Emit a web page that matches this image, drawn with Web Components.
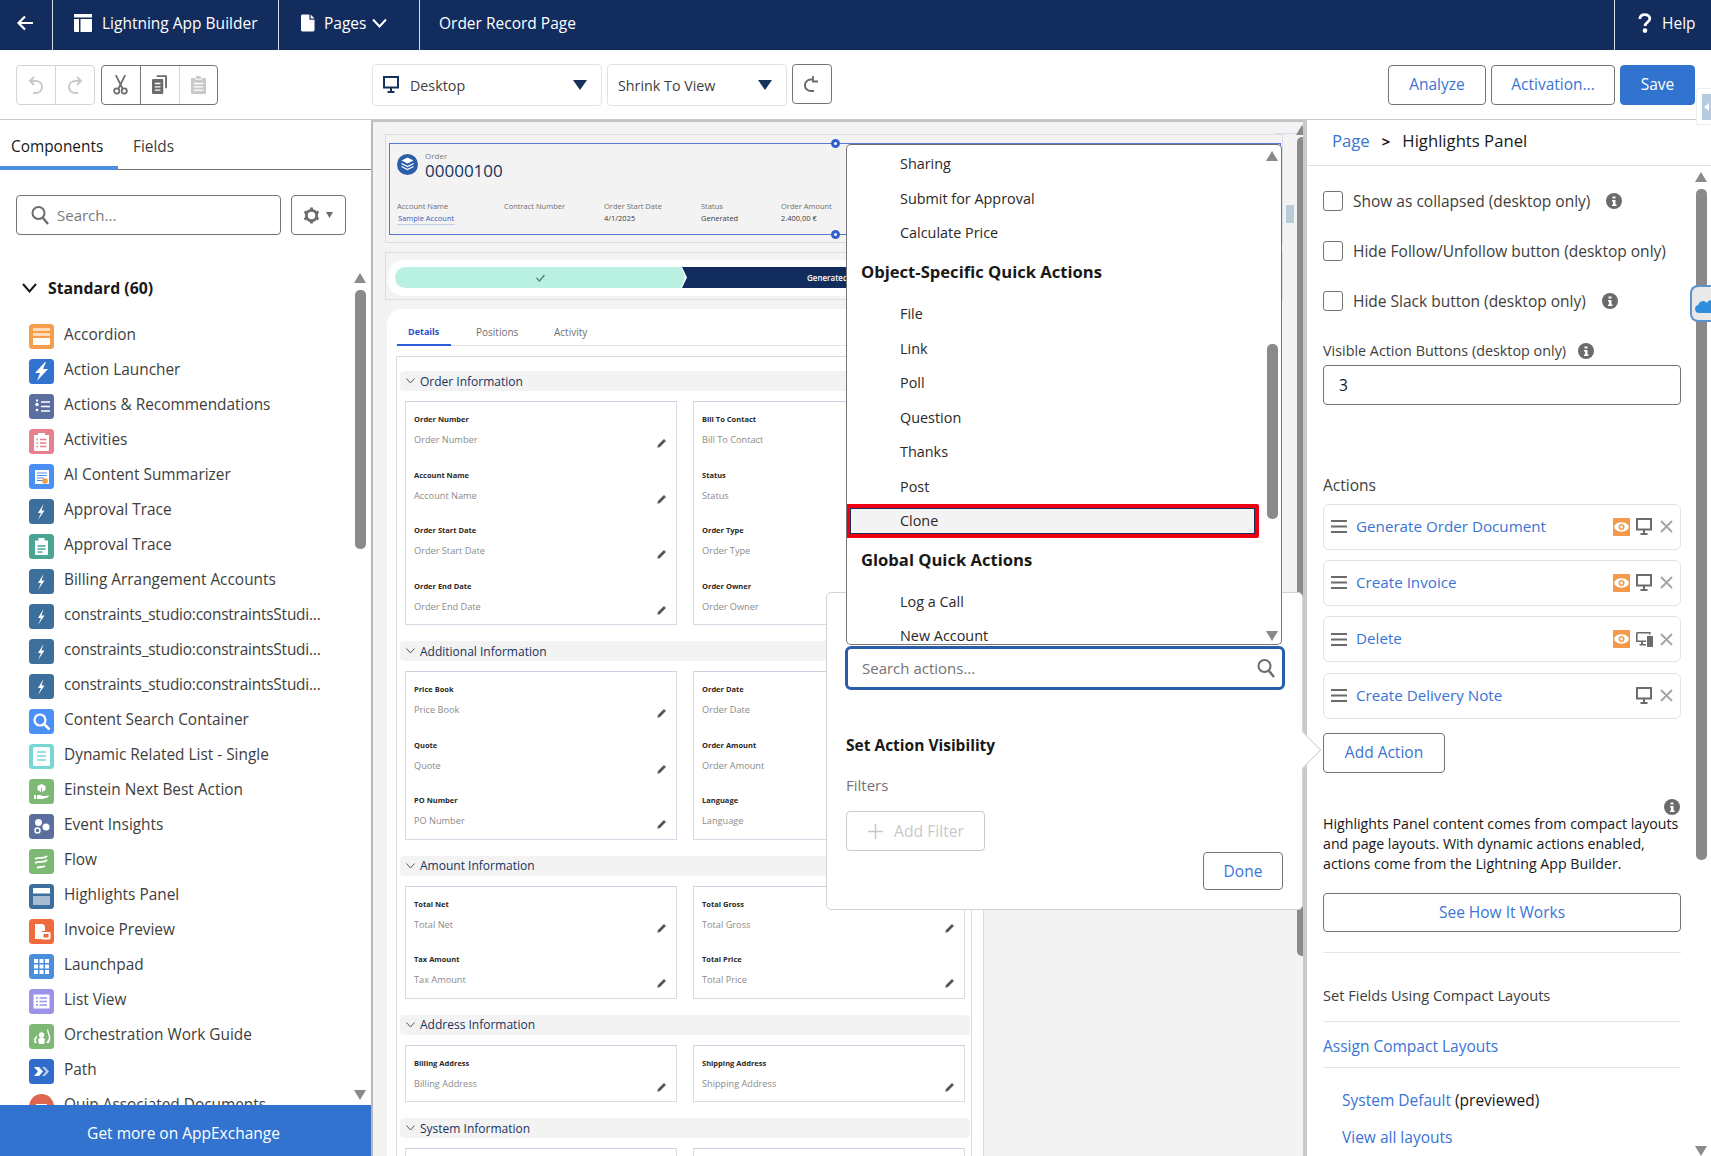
<!DOCTYPE html>
<html lang="en">
<head>
<meta charset="utf-8">
<title>Lightning App Builder</title>
<style>
	html,body{margin:0;height:100%;overflow:hidden;background:#fff;}
	body{font-family:"Open Sans","Noto Sans","Liberation Sans",sans-serif;}
</style>
</head>
<body>
<app-builder></app-builder>
<script>
const ICON = {
	back:`<svg width="18" height="18" viewBox="0 0 18 18" fill="none" stroke="#fff" stroke-width="2.2"><path d="M17 9H3M9 2.5 2.5 9 9 15.5"/></svg>`,
	app:`<svg width="20" height="20" viewBox="0 0 20 20" fill="#fff"><path d="M1 1h18v3.5H1z"/><path d="M1 6h5v13H2a1 1 0 0 1-1-1zM7.5 6H19v12a1 1 0 0 1-1 1H7.5z"/></svg>`,
	file:`<svg width="14" height="18" viewBox="0 0 15 18" fill="#fff"><path d="M1.5 0H9v5.5h5.5v11A1.5 1.5 0 0 1 13 18H1.5A1.5 1.5 0 0 1 0 16.5v-15A1.500 1.500 0 0 1 1.5 0z"/><path d="M10.3 0l4.200 4.200h-4.200z"/></svg>`,
	chev:`<svg width="15" height="10" viewBox="0 0 15 10" fill="none" stroke="#fff" stroke-width="2"><path d="M1 1.5 7.500 8.500 14 1.500"/></svg>`,
	help:`<svg width="14" height="20" viewBox="0 0 14 20" fill="none" stroke="#fff" stroke-width="2.8"><path d="M1.8 6C2 3 4 1.600 6.800 1.600c3 0 5 1.700 5 4.200 0 2.200-1.500 3-3 4-1.200.8-1.800 1.600-1.800 3.200"/><circle cx="7" cy="17.600" r="1" fill="#fff"/></svg>`,
	undo:`<svg width="16" height="20" viewBox="0 0 16 20" fill="none" stroke="currentColor" stroke-width="2"><path d="M6 2 2 6l4 4"/><path d="M2.5 6h5c4 0 6.500 2.500 6.500 6s-2.500 6-6.500 6H5"/></svg>`,
	redo:`<svg width="16" height="20" viewBox="0 0 16 20" fill="none" stroke="currentColor" stroke-width="2"><path d="M10 2l4 4-4 4"/><path d="M13.5 6h-5C4.500 6 2 8.500 2 12s2.500 6 6.500 6H11"/></svg>`,
	cut:`<svg width="15" height="21" viewBox="0 0 16 22" fill="none" stroke="currentColor" stroke-width="1.8"><path d="M3 1l7 14M13 1 6 15"/><circle cx="4" cy="18" r="2.800"/><circle cx="12" cy="18" r="2.800"/></svg>`,
	copy:`<svg width="15" height="19" viewBox="0 0 16 20"><path fill="currentColor" d="M5 0h10a1 1 0 0 1 1 1v13h-2V2H5z"/><path fill="currentColor" d="M1 4h10a1 1 0 0 1 1 1v14a1 1 0 0 1-1 1H1a1 1 0 0 1-1-1V5a1 1 0 0 1 1-1z"/><path stroke="#fff" stroke-width="1.5" d="M3 9h6M3 12.500h6M3 16h6"/></svg>`,
	paste:`<svg width="15" height="19" viewBox="0 0 16 20"><path fill="currentColor" d="M1 3h14a1 1 0 0 1 1 1v15a1 1 0 0 1-1 1H1a1 1 0 0 1-1-1V4a1 1 0 0 1 1-1z"/><path fill="currentColor" stroke="#fff" d="M5 .5h6v4H5z"/><path stroke="#fff" stroke-width="1.5" d="M3 9h10M3 12.500h10M3 16h10"/></svg>`,
	desk:`<svg width="16" height="18" viewBox="0 0 16 18"><path fill="none" stroke="currentColor" stroke-width="2" d="M1 1h14v10.500H1z"/><path fill="currentColor" d="M7 12h2v3h2.500v2h-7v-2H7z"/></svg>`,
	refresh:`<svg width="16" height="18" viewBox="0 0 16 18" fill="none" stroke="#6b6b6b" stroke-width="2"><path d="M9.5 4.500H7.500a5.800 5.800 0 1 0 0 11.500H10"/><path d="M9 1v5.500h5" stroke-width="1.8"/></svg>`,
	search:`<svg width="18" height="20" viewBox="0 0 18 20" fill="none" stroke="#6b6b6b" stroke-width="2"><circle cx="7.5" cy="8" r="6"/><path d="M12 13l5 6" stroke-width="2.4"/></svg>`,
	gear:`<svg width="15" height="19" viewBox="0 0 16 20"><circle cx="8" cy="10" r="5.500" fill="none" stroke="#6b6b6b" stroke-width="3"/><path stroke="#6b6b6b" stroke-width="3" d="M8 1.500v3M8 15.500v3M.5 6l3 1.800M12.500 12.200l3 1.800M.5 14l3-1.800M12.500 7.800l3-1.800"/></svg>`,
	tri:`<svg width="7" height="6" viewBox="0 0 7 6"><path fill="#6b6b6b" d="M0 0h7L3.500 6z"/></svg>`,
	info:`<svg width="16" height="16" viewBox="0 0 16 16"><circle cx="8" cy="8" r="8" fill="#6b6b6b"/><path fill="#fff" d="M6.500 3.500h3v2h-3zM6 7h3.500v4.500h1V13h-4.500v-1.500h1V8.500H6z"/></svg>`,
	pencil:`<svg width="9" height="9" viewBox="0 0 9 9"><path fill="#555" d="M.3 8.700l.7-2.700L6.400.6l2 2L3 8zM7 0l2 2-.5.5-2-2z"/></svg>`,
	drag:`<svg width="16" height="13" viewBox="0 0 16 13" fill="#6b6b6b"><path d="M0 0h16v2H0zM0 5.500h16v2H0zM0 11h16v2H0z"/></svg>`,
	eye:`<svg width="17" height="18" viewBox="0 0 17 18"><path fill="#f49b4a" d="M0 0h17v18H0z"/><ellipse cx="8.500" cy="9" rx="7.300" ry="4.700" fill="#fff"/><circle cx="8.500" cy="9" r="3" fill="#f49b4a"/><circle cx="8.500" cy="9" r="1.400" fill="#fff"/></svg>`,
	close:`<svg width="13" height="13" viewBox="0 0 13 13" fill="none" stroke="#a3a3a3" stroke-width="1.8"><path d="M1 1l11 11M12 1 1 12"/></svg>`,
	multi:`<svg width="17" height="15" viewBox="0 0 17 15"><path fill="none" stroke="#6b6b6b" stroke-width="1.6" d="M.8.800h13v1.700M.8.800v8.500H10"/><path fill="#6b6b6b" d="M5 10h2v2h3v1.500H3.500V12H5zM11 4h6v11h-6z"/></svg>`,
	plus:`<svg width="15" height="15" viewBox="0 0 15 15" stroke="#c9c9c9" stroke-width="1.6"><path d="M7.500 0v15M0 7.500h15"/></svg>`,
	layers:`<svg width="21" height="21" viewBox="0 0 21 21"><circle cx="10.500" cy="10.500" r="10.500" fill="#2a5ea6"/><path fill="#fff" d="M10.500 3.500l6 3-6 3-6-3z"/><path fill="none" stroke="#fff" stroke-width="1.3" d="M4.500 9.500l6 3 6-3M4.500 12.500l6 3 6-3"/></svg>`,
	cloud:`<svg width="20" height="13" viewBox="0 0 20 13"><path fill="#2f8fdc" d="M5 13a4 4 0 0 1-.8-7.900A5 5 0 0 1 13 3a3.500 3.500 0 0 1 7 2v8z"/></svg>`
}
const BOLT = `<path fill="#fff" d="M14.500 5 9 14h3l-3 7 6.500-9.500h-3z"/>`
const tile = (bg, body) => `<svg width="25" height="25" viewBox="0 0 25 25"><rect width="25" height="25" rx="3.500" fill="${bg}"/>${body}</svg>`
const TILE = {
	accordion:tile('#f59e4c',`<path fill="#fcdcbc" d="M4 4h17v3H4zM4 9h17v3H4z"/><path fill="#fff" d="M4 14h17v7H4z"/>`),
	launcher:tile('#3273d0',`<path fill="#fff" d="M16 3 6 14h5l-3 8 11-12h-5l3-7z"/>`),
	recs:tile('#5a6f9f',`<path stroke="#fff" stroke-width="1.5" d="M12 8h9M12 12.500h9M12 17h9"/><circle cx="8" cy="10.500" r="1.700" fill="#fff"/><circle cx="8" cy="16" r="1.300" fill="#fff"/><path fill="#fff" d="M7 5.500h2v2H7z"/>`),
	activity:tile('#e9808e',`<path fill="#fff" d="M5 6h15v15a1 1 0 0 1-1 1H6a1 1 0 0 1-1-1z"/><path fill="#fff" d="M9 4h7v3H9z"/><path stroke="#e9808e" stroke-width="1.3" d="M7.500 10.500h1.500M11 10.500h6.500M7.500 14h1.500M11 14h6.500M7.500 17.500h1.500M11 17.500h6.500"/>`),
	ai:tile('#4a90f2',`<path fill="#fff" d="M6 6h14v14H6z"/><path stroke="#4a90f2" d="M8 9h10M8 11.500h10M8 14h7M8 16.500h6"/><circle cx="16" cy="17" r="2.800" fill="#f49b4a"/>`),
	bolt:tile('#3d6f9c',BOLT),
	approve:tile('#4aa594',`<path fill="#fff" d="M6 6.500h13V20a1 1 0 0 1-1 1H7a1 1 0 0 1-1-1z"/><path fill="#fff" d="M9.500 4h6v3.500h-6z"/><path stroke="#4aa594" stroke-width="1.3" d="M8.500 12h8M8.500 15h8M8.500 18h5"/>`),
	search:tile('#4a90f5',`<circle cx="11" cy="11" r="5.500" fill="none" stroke="#fff" stroke-width="2.2"/><path stroke="#fff" stroke-width="2.5" d="M15 15l5.500 5.500"/>`),
	related:tile('#78d6d8',`<rect x="4" y="3" width="17" height="19" rx="1.500" fill="#fff"/><path stroke="#78d6d8" stroke-width="1.7" d="M8 8h9M8 12h9M8 16h9"/>`),
	einstein:tile('#7db974',`<path fill="#fff" d="M12.500 5l4 2v4l-4 2.200L8.500 11V7z"/><path fill="#7db974" d="M12 9h1v4h-1z"/><path fill="#fff" d="M5 16h2v4H5zM8 16.500c2-1 4 0 5.500.5h3l3-.5c.7.500 0 1.500-1 2l-5 1.500H8z"/>`),
	event:tile('#5a6f9f',`<circle cx="9.500" cy="8.500" r="3.500" fill="#fff"/><circle cx="17" cy="13" r="3.500" fill="#fff"/><circle cx="8.500" cy="16.500" r="2.500" fill="none" stroke="#fff" stroke-width="1.5"/>`),
	flow:tile('#7db974',`<path fill="none" stroke="#fff" stroke-width="1.8" d="M6 10c4-3 8 1 12-3M6 14c4-3 8 1 12-3M8 19c3-2 5 0 8-2"/>`),
	highlights:tile('#3d6f9c',`<path fill="#fff" d="M4 4h17v5.500H4z"/><path fill="#a9bdd1" d="M4 12h17v9H4z"/>`),
	invoice:tile('#ef6a3c',`<path fill="#fff" d="M6 5h8l2 2v5h-3v8H6z"/><rect x="12.500" y="13" width="9" height="7.500" rx="1" fill="#fff"/><rect x="14.500" y="15" width="5" height="3.500" fill="#ef6a3c"/>`),
	launchpad:tile('#4a8fdc',`<path fill="#fff" d="M5 5h4v4H5zM10.500 5h4v4h-4zM16 5h4v4h-4zM5 10.500h4v4H5zM10.500 10.500h4v4h-4zM16 10.500h4v4h-4zM5 16h4v4H5zM10.500 16h4v4h-4zM16 16h4v4h-4z"/>`),
	list:tile('#9b93e8',`<path fill="#fff" d="M4.500 5.500h16v14h-16z"/><path stroke="#9b93e8" stroke-width="1.4" d="M7 9h2M10.500 9H18M7 12.500h2M10.500 12.500H18M7 16h2M10.500 16H18"/>`),
	orch:tile('#7db974',`<circle cx="12.500" cy="11" r="2.700" fill="#fff"/><path fill="#fff" d="M9 15l3.500-2 3.500 2-1 5h-5zM5 15l3-4v3l-1.500 2L8 19H5.500zM20 14l-2-8 1-1 2.500 9-1.500 5h-3l1.500-2z"/>`),
	path:tile('#2f6ccb',`<path fill="#fff" d="M5 8h5l4 4.500-4 4.500H5l4-4.500z"/><path fill="#b9cdf0" d="M13 8h3l4 4.500-4 4.500h-3l4-4.500z"/>`),
	quip:`<svg width="25" height="25" viewBox="0 0 25 25"><circle cx="12.500" cy="12.500" r="12.500" fill="#e0654f"/><path fill="#fff" d="M7 10h11v2H7z"/></svg>`
}

class AppBuilder extends HTMLElement {
	connectedCallback(){
		this.attachShadow({mode:'open'}).innerHTML = `
		<style>
			:host{display:flex;flex-direction:column;width:1711px;height:1156px;position:relative;overflow:hidden;color:#181818;}
			.main{flex:1;min-height:0;display:grid;grid-template-columns:371px 932px 408px;position:relative;}
			.tab-a,.tab-b{position:absolute;box-sizing:border-box;}
			.tab-a{left:1696px;top:88px;width:15px;height:37px;background:#fff;border:1px solid #eee;border-right:0;border-radius:3px 0 0 3px;padding:5px 0 0 5px;}
			.tab-a i{display:block;height:26px;background:#b6cbdf;position:relative;}
			.tab-a i:after{content:"";position:absolute;left:2px;top:9px;border:4px solid transparent;border-right:5px solid #fff;border-left:0;}
			.tab-b{left:1690px;top:285px;width:22px;height:37px;background:#e9e9e9;border:2px solid #5c93cd;border-right:0;border-radius:8px 0 0 8px;padding:9px 0 0 2px;overflow:hidden;}
		</style>
		<lab-header></lab-header>
		<lab-toolbar></lab-toolbar>
		<div class="main">
			<comp-panel></comp-panel>
			<page-canvas></page-canvas>
			<prop-panel></prop-panel>
			<action-popover></action-popover>
		</div>
		<div class="tab-a"><i></i></div>
		<div class="tab-b">${ICON.cloud}</div>`;
	}
}

class LabHeader extends HTMLElement {
	connectedCallback(){
		this.attachShadow({mode:'open'}).innerHTML = `
		<style>
			:host{display:flex;height:50px;background:#132c5e;color:#fff;font-size:15.5px;align-items:stretch;}
			.cell{display:flex;align-items:center;box-sizing:border-box;border-right:1px solid #d8dde8;padding-bottom:4px;}
			.back{width:53px;padding-left:16px;}
			.app{width:226px;padding-left:20px;gap:9px;}
			.pages{width:141px;padding-left:22px;gap:11px;}
			.pages b{font-weight:400;margin:0 -5px 0 -2px;}
			.title{padding-left:19px;display:flex;align-items:center;flex:1;padding-bottom:4px;}
			.help{width:97px;border-left:1px solid #d8dde8;border-right:0;padding-left:23px;gap:10px;}
		</style>
		<div class="cell back">${ICON.back}</div>
		<div class="cell app">${ICON.app}<span>Lightning App Builder</span></div>
		<div class="cell pages">${ICON.file}<b>Pages</b>${ICON.chev}</div>
		<div class="title">Order Record Page</div>
		<div class="cell help">${ICON.help}<span>Help</span></div>`;
	}
}

class LabButton extends HTMLElement {
	connectedCallback(){
		this.attachShadow({mode:'open'}).innerHTML = `
		<style>
			:host{display:inline-flex;align-items:center;justify-content:center;box-sizing:border-box;height:40px;border:1px solid #747474;border-radius:4px;background:#fff;color:#3a74d4;font-size:15.5px;white-space:nowrap;padding-bottom:2px;}
			:host([brand]){background:#3273d0;border-color:#3273d0;color:#fff;}
			:host([off]){border-color:#c9c9c9;color:#c4c4c4;}
		</style><slot></slot>`;
	}
}

class LabToolbar extends HTMLElement {
	connectedCallback(){
		const sel = (w, inner) => `<div class="sel" style="width:${w}px">${inner}<span class="tri"></span></div>`;
		this.attachShadow({mode:'open'}).innerHTML = `
		<style>
			:host{display:flex;align-items:center;height:70px;box-sizing:border-box;border-bottom:1px solid #c9c9c9;padding:0 16px;color:#181818;}
			.grp{display:flex;border:1px solid #747474;border-radius:4px;height:40px;box-sizing:border-box;margin-right:6px;}
			.grp.off{border-color:#d4d4d4;}
			.grp span{width:38.4px;display:flex;align-items:center;justify-content:center;box-sizing:border-box;color:#6b6b6b;}
			.grp span+span{border-left:1px solid #747474;}
			.grp.off span{color:#c9c9c9;border-color:#d4d4d4;}
			.grp span.dis{color:#c9c9c9;border-left:1px solid #747474;}
			.sel{height:42px;box-sizing:border-box;border:1px solid #e3e3e3;border-radius:4px;display:flex;align-items:center;padding:1px 14px 0 10px;font-size:14.3px;color:#3e3e3c;margin-right:5px;gap:11px;}
			.sel em{font-style:normal;flex:1;}
			.sel svg{color:#16325c;}
			.tri{width:0;height:0;border:7px solid transparent;border-top:10px solid #16325c;border-bottom:0;}
			.re{width:40px;height:40px;box-sizing:border-box;border:1px solid #747474;border-radius:4px;display:flex;align-items:center;justify-content:center;margin-top:-2px;}
			.gap{width:148px;}
			.right{margin-left:auto;display:flex;gap:5px;}
		</style>
		<div class="grp off"><span>${ICON.undo}</span><span>${ICON.redo}</span></div>
		<div class="grp"><span>${ICON.cut}</span><span>${ICON.copy}</span><span class="dis" style="border-left-color:#d4d4d4">${ICON.paste}</span></div>
		<div class="gap"></div>
		${sel(230,`${ICON.desk}<em>Desktop</em>`)}
		${sel(180,`<em>Shrink To View</em>`)}
		<div class="re">${ICON.refresh}</div>
		<div class="right">
			<lab-button style="width:98px">Analyze</lab-button>
			<lab-button style="width:124px">Activation...</lab-button>
			<lab-button brand style="width:75px">Save</lab-button>
		</div>`;
	}
}

class VScroll extends HTMLElement {
	connectedCallback(){
		const t = this.getAttribute('thumb-top'), h = this.getAttribute('thumb-h');
		this.attachShadow({mode:'open'}).innerHTML = `
		<style>
			:host{position:absolute;display:block;width:12px;}
			.up,.dn{position:absolute;left:0;width:0;height:0;border:6px solid transparent;}
			.up{top:0;border-top:0;border-bottom:10px solid #8a8a8a;}
			.dn{bottom:0;border-bottom:0;border-top:10px solid #8a8a8a;}
			.th{position:absolute;left:1px;width:11px;border-radius:5px;background:#8a8a8a;top:${t}px;height:${h}px;}
		</style>
		<div class="up"></div><div class="th"></div><div class="dn"></div>`;
	}
}

class CompItem extends HTMLElement {
	connectedCallback(){
		this.attachShadow({mode:'open'}).innerHTML = `
		<style>
			:host{display:flex;align-items:center;height:35px;gap:10px;font-size:15.4px;color:#3e3e3c;white-space:nowrap;}
			svg{display:block;flex:none;}
			span{position:relative;top:-2px;}
		</style>
		${TILE[this.getAttribute('icon')]}<span><slot></slot></span>`;
	}
}

class CompPanel extends HTMLElement {
	connectedCallback(){
		const items = [['accordion','Accordion'],['launcher','Action Launcher'],['recs','Actions &amp; Recommendations'],['activity','Activities'],['ai','AI Content Summarizer'],['bolt','Approval Trace'],['approve','Approval Trace'],['bolt','Billing Arrangement Accounts'],['bolt','constraints_studio:constraintsStudi...'],['bolt','constraints_studio:constraintsStudi...'],['bolt','constraints_studio:constraintsStudi...'],['search','Content Search Container'],['related','Dynamic Related List - Single'],['einstein','Einstein Next Best Action'],['event','Event Insights'],['flow','Flow'],['highlights','Highlights Panel'],['invoice','Invoice Preview'],['launchpad','Launchpad'],['list','List View'],['orch','Orchestration Work Guide'],['path','Path'],['quip','Quip Associated Documents']];
		this.attachShadow({mode:'open'}).innerHTML = `
		<style>
			:host{display:flex;flex-direction:column;position:relative;min-height:0;height:1036px;background:#fff;overflow:hidden;}
			.tabs{display:flex;height:50px;box-sizing:border-box;border-bottom:1px solid #747474;font-size:15.4px;color:#3e3e3c;position:relative;}
			.tabs div{padding:14px 0 0 11px;line-height:26px;height:46px;box-sizing:border-box;}
			.tabs .on{width:118px;border-bottom:4px solid #4a90e2;color:#181818;height:50px;margin-bottom:-1px;}
			.tabs .f{padding-left:15px;}
			.find{display:flex;gap:10px;padding:25px 0 0 16px;}
			.box{height:40px;box-sizing:border-box;border:1px solid #747474;border-radius:4px;display:flex;align-items:center;}
			.q{width:265px;padding-left:14px;gap:8px;color:#7a7a7a;font-size:15px;}
			.g{width:55px;justify-content:center;gap:7px;}
			.std{display:flex;align-items:center;gap:11px;padding-left:22px;margin-top:41px;height:24px;font-weight:700;font-size:15.8px;}
			.std svg{stroke:#181818;}
			.list{flex:1;min-height:0;overflow:hidden;padding:19px 0 0 29px;}
			.more{height:51px;flex:none;box-sizing:border-box;padding:5px 4px 0 0;background:#3273d0;color:#fff;font-size:15.5px;display:flex;align-items:center;justify-content:center;}
		</style>
		<div class="tabs"><div class="on">Components</div><div class="f">Fields</div></div>
		<div class="find"><div class="box q">${ICON.search}<span>Search...</span></div><div class="box g">${ICON.gear}${ICON.tri}</div></div>
		<div class="std"><svg width="15" height="10" viewBox="0 0 15 10" fill="none" stroke-width="2"><path d="M1 1l6.500 7.500L14 1"/></svg><span>Standard (60)</span></div>
		<div class="list">${items.map(i=>`<comp-item icon="${i[0]}"${i[1].startsWith('constraints')?' style="letter-spacing:-.2px"':''}>${i[1]}</comp-item>`).join('')}</div>
		<div class="more">Get more on AppExchange</div>
		<v-scroll style="left:354px;top:153px;height:827px" thumb-top="17" thumb-h="259"></v-scroll>`;
	}
}

class RecField extends HTMLElement {
	connectedCallback(){
		this.attachShadow({mode:'open'}).innerHTML = `
		<style>
			:host{display:block;position:relative;height:var(--pitch,55.5px);padding-left:8px;line-height:12px;white-space:nowrap;}
			:host(:last-child){height:33px;}
			b{display:block;color:#2b2826;margin-bottom:9px;font-size:7.5px;}
			span{display:block;color:#8b8b8b;font-size:9.2px;}
			svg{position:absolute;right:10px;top:26px;}
		</style>
		<b>${this.getAttribute('label')}</b><span>${this.getAttribute('label')}</span>${ICON.pencil}`;
	}
}

class RecSection extends HTMLElement {
	connectedCallback(){
		this.attachShadow({mode:'open'}).innerHTML = `
		<style>
			:host{display:block;margin-bottom:16px;}
			.hd{display:flex;align-items:center;height:20px;margin:0 1px 10px 2px;background:#f3f3f3;border-radius:4px;padding-left:6px;gap:5px;font-size:12px;color:#16325c;}
			.hd svg{flex:none;}
			.cols{display:grid;grid-template-columns:272px 272px;gap:16px;margin-left:7px;}
		</style>
		<div class="hd"><svg width="9" height="6" viewBox="0 0 9 6" fill="none" stroke="#555"><path d="M.5.500 4.500 5l4-4.500"/></svg>${this.getAttribute('title')}</div>
		<div class="cols"><slot></slot></div>`;
	}
}

class RecCol extends HTMLElement {
	connectedCallback(){
		this.attachShadow({mode:'open'}).innerHTML = `
		<style>
			:host{display:block;box-sizing:border-box;border:1px solid #d5dbe7;border-top-color:#cbd3e3;padding:11px 0 11.5px;background:#fff;min-height:40px;}
		</style><slot></slot>`;
	}
}

class PageCanvas extends HTMLElement {
	connectedCallback(){
		const hf = (w,a,b,cls='') => `<div class="hf" style="width:${w}px"><span>${a}</span><span class="${cls}">${b}</span></div>`;
		const col = (names) => `<rec-col>${names.map(n=>`<rec-field label="${n}"></rec-field>`).join('')}</rec-col>`;
		this.attachShadow({mode:'open'}).innerHTML = `
		<style>
			:host{display:block;position:relative;height:1036px;overflow:hidden;background:#f3f3f3;box-sizing:border-box;border-left:2px solid #b9b9b9;border-top:2px solid #c2c2c2;padding:12px 0 0 12px;}
			.frame{width:898px;box-sizing:border-box;border:1px solid #d8dce6;position:relative;}
			.hl{height:109px;margin-bottom:9px;padding:8px 3px 0;}
			.sel{position:relative;height:92px;box-sizing:border-box;border:1.5px solid #5877d8;width:892px;padding:6px 7px 0;}
			.ord{display:flex;gap:7px;}
			.ord svg{display:block;margin-top:4px;}
			.ord small{display:block;font-size:8px;line-height:11px;color:#7a7a7a;}
			.ord strong{display:block;font-weight:400;font-size:17px;line-height:21px;color:#16325c;margin-top:-1px;}
			.flds{display:flex;margin-top:20px;font-size:7.5px;line-height:11px;}
			.hf span{display:block;color:#6f6f6f;white-space:nowrap;}
			.hf span+span{color:#3e3e3c;margin-top:1px;}
			.hf .lnk{color:#2f5fc4;display:inline-block;border-bottom:1px solid #c3cfeb;padding:0 1px;}
			.dot{position:absolute;left:441px;width:9px;height:9px;box-sizing:border-box;border-radius:50%;background:#fff;border:3px solid #2f5fd0;}
			.pathf{height:48px;margin-bottom:9px;padding-top:7px;}
			.pw{background:#fff;border-radius:15px;height:36px;margin:0 2px;padding:7px 0 0 7px;box-sizing:border-box;display:flex;}
			.done{width:290px;height:21px;background:#b8f0e1;border-radius:11px 0 0 11px;display:flex;align-items:center;justify-content:center;clip-path:polygon(0 0,286px 0,290px 50%,286px 100%,0 100%);}
			.cur{flex:1;margin-right:8px;margin-left:-3px;height:21px;background:#132c5e;color:#fff;font-size:8px;font-weight:600;line-height:21px;padding-left:125px;clip-path:polygon(0 0,100% 0,100% 100%,0 100%,5px 50%);}
			.card{width:597px;background:#fff;border-radius:15px 0 0 0;margin-left:2px;padding-top:12px;box-sizing:border-box;position:relative;height:860px;border-right:1px solid #d5dbe7;}
			.tabs{display:flex;font-size:10px;height:24px;line-height:22px;color:#6f6f6f;margin:0 0 0 11px;border-bottom:1px solid #e5e5e5;}
			.tabs span{display:block;}
			.tabs .on{color:#2a4fc4;font-weight:700;font-size:9px;border-bottom:2px solid #2a5bd8;height:23px;width:34px;margin-right:25px;padding:0 10px;margin-left:-1px;}
			.tabs .on b{margin-left:1px;font-weight:700;}
			.tabs .m{width:42px;margin-right:36px;}
			.body{margin:10px 0 0 9px;width:576px;box-sizing:border-box;border:1px solid #d8dce6;border-width:1px 1px 0 1px;padding-top:14px;padding-left:1px;height:820px;}
			.sb{position:absolute;left:903px;top:11px;width:294px;border-top:1px solid #d8dce6;}
			.nub{position:absolute;left:913px;top:83px;width:8px;height:18px;background:#b9cdd9;}
		</style>
		<div class="frame hl">
			<div class="sel">
				<div class="ord">${ICON.layers}<div><small>Order</small><strong>00000100</strong></div></div>
				<div class="flds">
					${hf(107,'Account Name','Sample Account','lnk')}${hf(100,'Contract Number','&nbsp;')}${hf(97,'Order Start Date','4/1/2025')}${hf(80,'Status','Generated')}${hf(80,'Order Amount','2.400,00 €')}
				</div>
				<i class="dot" style="top:-5px"></i><i class="dot" style="bottom:-5px"></i>
			</div>
		</div>
		<div class="frame pathf">
			<div class="pw">
				<div class="done"><svg width="9" height="8" viewBox="0 0 9 8" fill="none" stroke="#55897f" stroke-width="1.5"><path d="M.5 4l3 3 5-6"/></svg></div>
				<div class="cur">Generated</div>
			</div>
		</div>
		<div class="card">
			<div class="tabs"><span class="on"><b>Details</b></span><span class="m">Positions</span><span class="m">Activity</span></div>
			<div class="body">
				<rec-section title="Order Information">
					${col(['Order Number','Account Name','Order Start Date','Order End Date'])}
					${col(['Bill To Contact','Status','Order Type','Order Owner'])}
				</rec-section>
				<rec-section title="Additional Information">
					${col(['Price Book','Quote','PO Number'])}
					${col(['Order Date','Order Amount','Language'])}
				</rec-section>
				<rec-section title="Amount Information">
					${col(['Total Net','Tax Amount'])}
					${col(['Total Gross','Total Price'])}
				</rec-section>
				<rec-section title="Address Information">
					${col(['Billing Address'])}
					${col(['Shipping Address'])}
				</rec-section>
				<rec-section title="System Information">
					${col([])}
					${col([])}
				</rec-section>
			</div>
		</div>
		<div class="sb"></div>
		<div class="nub"></div>
		<v-scroll style="left:923px;top:3px;height:1100px;width:8px;overflow:hidden" thumb-top="12" thumb-h="819"></v-scroll>`;
	}
}

class PropPanel extends HTMLElement {
	connectedCallback(){
		const chk = (t,info,mb) => `<div class="chk" style="margin-bottom:${mb}px"><i></i><span>${t}</span>${info?ICON.info:''}</div>`;
		const row = (t,eye,dev=ICON.desk) => `<div class="row">${ICON.drag}<a>${t}</a><div class="ic">${eye?ICON.eye:''}<span class="d">${dev}</span>${ICON.close}</div></div>`;
		this.attachShadow({mode:'open'}).innerHTML = `
		<style>
			:host{display:block;position:relative;box-sizing:border-box;height:1036px;border-left:4px solid #c9c9c9;background:#fff;overflow:hidden;font-size:15.5px;color:#3e3e3c;}
			a{color:#3a74d4;}
			.crumb{display:flex;align-items:center;height:46px;box-sizing:border-box;border-bottom:1px solid #dfdfdf;padding:0 0 4px 25px;font-size:16.7px;color:#181818;}
			.crumb b{margin:0 12px 0 12px;font-size:15px;}
			.body{padding:25px 26px 0 16px;width:358px;}
			.chk{display:flex;align-items:center;height:20px;gap:10px;white-space:nowrap;}
			.chk i{width:20px;height:20px;box-sizing:border-box;border:1px solid #747474;border-radius:3px;flex:none;}
			.chk svg{margin-left:6px;}
			.lbl{height:20px;line-height:20px;display:flex;align-items:center;gap:12px;white-space:nowrap;}
			.inp{height:40px;box-sizing:border-box;border:1px solid #747474;border-radius:4px;margin-top:4px;padding-left:15px;line-height:38px;color:#181818;}
			.row{height:46px;box-sizing:border-box;border:1px solid #e3e3e3;border-radius:6px;margin-bottom:10.4px;display:flex;align-items:center;padding:0 7px;font-size:15.2px;}
			.row a{margin-left:9px;flex:1;position:relative;top:-1px;white-space:nowrap;}
			.ic{display:flex;align-items:center;}
			.ic .d{color:#6b6b6b;width:17px;margin:0 7px 0 6px;display:flex;}
			.info{display:flex;justify-content:flex-end;margin-top:26px;padding-right:1px;}
			p{margin:-1px 0 19px;line-height:20px;color:#181818;font-size:14.2px;white-space:nowrap;}
			hr{border:0;border-top:1px solid #e5e5e5;margin:0;}
			.ln{line-height:20px;}
		</style>
		<div class="crumb"><a>Page</a><b>&gt;</b><span>Highlights Panel</span></div>
		<div class="body">
			${chk('Show as collapsed (desktop only)',1,30)}
			${chk('Hide Follow/Unfollow button (desktop only)',0,29.5)}
			${chk('Hide Slack button (desktop only)',1,30)}
			<div class="lbl" style="font-size:14.35px">Visible Action Buttons (desktop only)${ICON.info}</div>
			<div class="inp">3</div>
			<div class="lbl" style="margin:70px 0 9px">Actions</div>
			${row('Generate Order Document',1)}
			${row('Create Invoice',1)}
			${row('Delete',1,ICON.multi)}
			${row('Create Delivery Note',0)}
			<lab-button style="width:122px;margin-top:4px">Add Action</lab-button>
			<div class="info">${ICON.info}</div>
			<p>Highlights Panel content comes from compact layouts<br>and page layouts. With dynamic actions enabled,<br>actions come from the Lightning App Builder.</p>
			<lab-button style="display:flex;height:39px">See How It Works</lab-button>
			<hr style="margin-top:20px">
			<div class="ln" style="margin:32px 0 16px;font-size:14.6px">Set Fields Using Compact Layouts</div>
			<hr>
			<div class="ln" style="margin:14px 0 11px"><a>Assign Compact Layouts</a></div>
			<hr>
			<div class="ln" style="margin:22px 0 17px 19px"><a>System Default</a> <span style="color:#181818">(previewed)</span></div>
			<div class="ln" style="margin-left:19px"><a>View all layouts</a></div>
		</div>
		<v-scroll style="left:388px;top:52px;height:984px" thumb-top="17" thumb-h="671"></v-scroll>`;
	}
}

class ActionPopover extends HTMLElement {
	connectedCallback(){
		const it = (t,c='') => `<div class="it ${c}">${t}</div>`;
		this.attachShadow({mode:'open'}).innerHTML = `
		<style>
			:host{position:absolute;left:826px;top:472px;width:477px;height:318px;box-sizing:border-box;display:block;background:#fff;border:1px solid #d4d4d4;border-radius:5px;padding:53px 19px 0 19px;font-size:15px;color:#181818;}
			.arrow{position:absolute;left:463px;top:144px;width:25px;height:25px;transform:rotate(45deg);background:#fff;border:1px solid #d4d4d4;border-width:1px 1px 0 0;}
			.drop{position:absolute;left:19px;top:-449px;width:436px;height:501px;box-sizing:border-box;background:#fff;border:1px solid #747474;border-top-color:#6b6b6b;border-radius:5px;overflow:hidden;padding-top:2px;}
			.it{height:34.5px;line-height:33px;padding-left:53px;width:413px;box-sizing:border-box;color:#2b2826;font-size:14.4px;}
			h4{margin:0;height:46.5px;line-height:42px;padding-left:14px;font-size:16.6px;font-weight:700;color:#181818;white-space:nowrap;}
			.clone{position:relative;background:#f3f3f3;border:4px solid #ee0011;border-radius:2px;box-shadow:inset 1px 1px 0 #16325c,inset -1px -1px 0 #16325c;padding-left:50px;line-height:26px;height:33.5px;left:-1px;margin-bottom:1px;}
			.srch{position:relative;width:440px;height:44px;box-sizing:border-box;margin-left:-1px;border:3px solid #2a5ca8;border-radius:6px;display:flex;align-items:center;justify-content:space-between;padding:0 7px 0 14px;color:#747474;}
			h5{margin:44px 0 0;font-size:15.5px;line-height:22px;font-weight:700;}
			.flt{margin-top:19px;line-height:20px;color:#747474;}
			.ft{display:flex;justify-content:flex-end;margin-top:1px;}
			.ft lab-button{width:80px;height:38px;padding-bottom:0;}
			.add{margin-top:16px;width:139px;display:flex;height:40px;box-sizing:border-box;border:1px solid #c9c9c9;border-radius:4px;align-items:center;padding-left:21px;gap:11px;color:#c9c9c9;font-size:15.7px;}
		</style>
		<div class="arrow"></div>
		<div class="srch"><span>Search actions...</span>${ICON.search}</div>
		<h5>Set Action Visibility</h5>
		<div class="flt">Filters</div>
		<div class="add">${ICON.plus}<span>Add Filter</span></div>
		<div class="ft"><lab-button>Done</lab-button></div>
		<div class="drop">
			${it('Sharing')}${it('Submit for Approval')}${it('Calculate Price')}
			<h4>Object-Specific Quick Actions</h4>
			${it('File')}${it('Link')}${it('Poll')}${it('Question')}${it('Thanks')}${it('Post')}${it('Clone','clone')}
			<h4 style="height:46px">Global Quick Actions</h4>
			${it('Log a Call')}${it('New Account')}
			<v-scroll style="left:419px;top:6px;height:490px" thumb-top="193" thumb-h="175"></v-scroll>
		</div>`;
	}
}

customElements.define('v-scroll',VScroll);
customElements.define('lab-button',LabButton);
customElements.define('lab-header',LabHeader);
customElements.define('lab-toolbar',LabToolbar);
customElements.define('comp-item',CompItem);
customElements.define('comp-panel',CompPanel);
customElements.define('rec-field',RecField);
customElements.define('rec-col',RecCol);
customElements.define('rec-section',RecSection);
customElements.define('page-canvas',PageCanvas);
customElements.define('prop-panel',PropPanel);
customElements.define('action-popover',ActionPopover);
customElements.define('app-builder',AppBuilder);
</script>
</body>
</html>
